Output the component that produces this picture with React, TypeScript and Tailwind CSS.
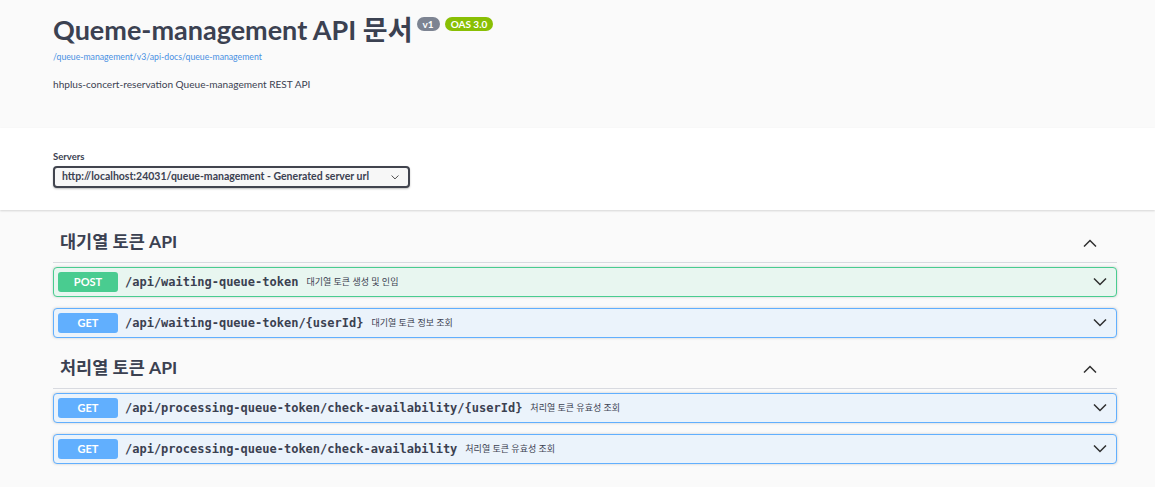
const sans = "font-['Lato','Noto_Sans_CJK_KR',sans-serif]";
const mono = "font-['DejaVu_Sans_Mono','Noto_Sans_CJK_KR',monospace]";

interface Op {
  method: "POST" | "GET";
  path: string;
  summary: string;
}

const groups: { name: string; ops: Op[] }[] = [
  {
    name: "대기열 토큰 API",
    ops: [
      { method: "POST", path: "/api/waiting-queue-token", summary: "대기열 토큰 생성 및 인입" },
      { method: "GET", path: "/api/waiting-queue-token/{userId}", summary: "대기열 토큰 정보 조회" },
    ],
  },
  {
    name: "처리열 토큰 API",
    ops: [
      {
        method: "GET",
        path: "/api/processing-queue-token/check-availability/{userId}",
        summary: "처리열 토큰 유효성 조회",
      },
      {
        method: "GET",
        path: "/api/processing-queue-token/check-availability",
        summary: "처리열 토큰 유효성 조회",
      },
    ],
  },
];

const Arrow = ({ up = false, className = "" }: { up?: boolean; className?: string }) => (
  <svg viewBox="0 0 14 8" className={className} fill="none" stroke="#303030" strokeWidth="1.5">
    {up ? <polyline points="1,7.5 7,1.5 13,7.5" /> : <polyline points="1,0.5 7,6.5 13,0.5" />}
  </svg>
);

const OpBlock = ({ op }: { op: Op }) => {
  const isPost = op.method === "POST";
  return (
    <div
      className={
        isPost
          ? "flex items-center h-[30px] mb-[11px] rounded-[4px] border border-[#49cc90] bg-[#e8f6f0] shadow-[0_0_3px_rgba(0,0,0,0.19)]"
          : "flex items-center h-[30px] mb-[11px] rounded-[4px] border border-[#61affe] bg-[#ebf3fb] shadow-[0_0_3px_rgba(0,0,0,0.19)]"
      }
    >
      <div
        className={
          isPost
            ? "ml-[4px] w-[60px] h-[20px] rounded-[3px] bg-[#49cc90] flex items-center justify-center text-white text-[11px] font-bold"
            : "ml-[4px] w-[60px] h-[20px] rounded-[3px] bg-[#61affe] flex items-center justify-center text-white text-[11px] font-bold"
        }
      >
        {op.method}
      </div>
      <span className={`${mono} ml-[7px] text-[12px] font-bold text-[#3b4151]`}>{op.path}</span>
      <span className="ml-[8px] text-[9px] text-[#3b4151]">{op.summary}</span>
      <Arrow className="ml-auto mr-[9px] w-[14px] h-[8px]" />
    </div>
  );
};

export default function App() {
  return (
    <div className={`${sans} min-h-[487px] bg-[#fafafa] text-[#3b4151]`}>
      <div className="h-[128px] pl-[53px] pt-[12px]">
        <div className="flex items-start">
          <h1 className="text-[27px] font-bold leading-[36px] text-[#3b4151]">Queme-management API 문서</h1>
          <span className="ml-[4px] mt-[5px] h-[14px] px-[6px] rounded-full bg-[#7d8492] text-white text-[10px] font-bold leading-[14px]">
            v1
          </span>
          <span className="ml-[5px] mt-[5px] h-[14px] px-[6px] rounded-full bg-[#89bf04] text-white text-[10px] font-bold leading-[14px]">
            OAS 3.0
          </span>
        </div>
        <div className="mt-[2px] text-[8.7px] text-[#4990e2]">/queue-management/v3/api-docs/queue-management</div>
        <div className="mt-[14px] text-[10.1px] text-[#3b4151]">hhplus-concert-reservation Queue-management REST API</div>
      </div>
      <div className="h-[82px] bg-white shadow-[0_1px_2px_0_rgba(0,0,0,0.15)] pl-[53px] pt-[23px]">
        <div className="text-[9.5px] font-bold leading-[12px]">Servers</div>
        <div className="mt-[3px] w-[357px] h-[22px] rounded-[4px] border-2 border-[#41444e] bg-[#f7f7f7] flex items-center pl-[7px] pr-[9px] shadow-[0_1px_2px_0_rgba(0,0,0,0.25)]">
          <span className="whitespace-nowrap text-[10.5px] font-bold text-[#3b4151]">
            http://localhost:24031/queue-management - Generated server url
          </span>
          <Arrow className="ml-auto w-[8px] h-[5px]" />
        </div>
      </div>
      <div className="pl-[53px] pr-[38px] pt-[13px]">
        {groups.map((g) => (
          <div key={g.name} className="mb-[7px]">
            <div className="h-[40px] flex items-center pl-[7px] border-b border-[#d8dae0] mb-[4px]">
              <span className="text-[17.5px] font-bold">{g.name}</span>
              <Arrow up className="ml-auto mr-[20px] w-[14px] h-[8px]" />
            </div>
            {g.ops.map((op) => (
              <OpBlock key={op.path} op={op} />
            ))}
          </div>
        ))}
      </div>
    </div>
  );
}
